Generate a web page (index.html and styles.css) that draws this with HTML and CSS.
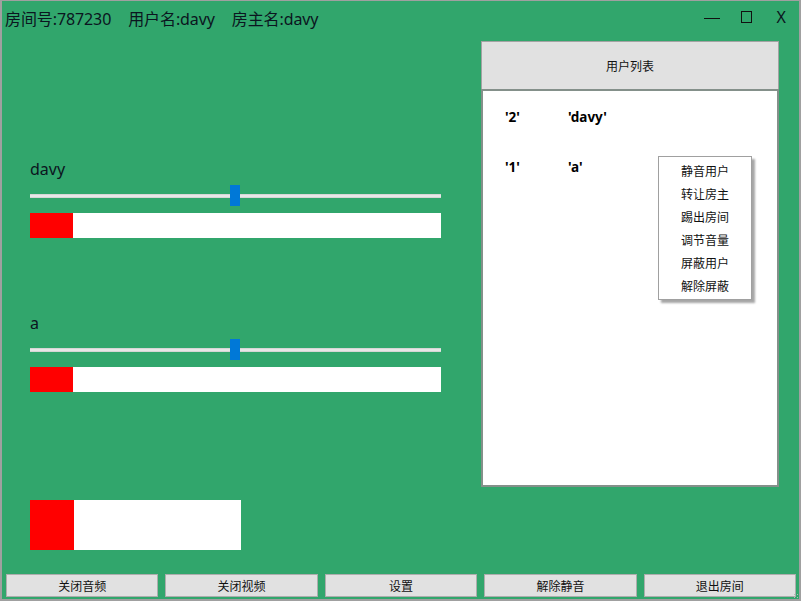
FILE: index.html
```html
<!DOCTYPE html>
<html lang="zh">
<head>
<meta charset="utf-8">
<title>房间</title>
<link rel="stylesheet" href="styles.css">
</head>
<body>
<div class="window">
  <div class="titlebar">
    <div class="title">
      <span>房间号:787230</span>
      <span>用户名:davy</span>
      <span>房主名:davy</span>
    </div>
    <div class="controls">
      <div class="ctl-min"></div>
      <div class="ctl-max"></div>
      <div class="ctl-close">X</div>
    </div>
  </div>
  <div class="main">
    <div class="left">
      <div class="channel">
        <div class="label">davy</div>
        <div class="slider"><div class="track"></div><div class="thumb"></div></div>
        <div class="meter"><div class="level" style="width:43px"></div></div>
      </div>
      <div class="channel second">
        <div class="label">a</div>
        <div class="slider"><div class="track"></div><div class="thumb"></div></div>
        <div class="meter"><div class="level" style="width:43px"></div></div>
      </div>
      <div class="meter big"><div class="level" style="width:44px"></div></div>
    </div>
    <div class="panel">
      <div class="panel-header">用户列表</div>
      <div class="panel-body">
        <div class="row"><span class="cell-id">'2'</span><span class="cell-name">'davy'</span></div>
        <div class="row"><span class="cell-id">'1'</span><span class="cell-name">'a'</span></div>
      </div>
      <div class="menu">
        <div class="menu-item">静音用户</div>
        <div class="menu-item">转让房主</div>
        <div class="menu-item">踢出房间</div>
        <div class="menu-item">调节音量</div>
        <div class="menu-item">屏蔽用户</div>
        <div class="menu-item">解除屏蔽</div>
      </div>
    </div>
  </div>
  <div class="buttons">
    <div class="btn">关闭音频</div>
    <div class="btn">关闭视频</div>
    <div class="btn">设置</div>
    <div class="btn">解除静音</div>
    <div class="btn">退出房间</div>
  </div>
  <div class="grip"></div>
</div>
</body>
</html>
```
FILE: styles.css
```css
html, body {
  margin: 0;
  padding: 0;
  background: #ffffff;
}
body {
  font-family: "Noto Sans", "Noto Sans CJK SC", sans-serif;
  color: #000;
}
.window {
  position: relative;
  width: 801px;
  height: 601px;
  box-sizing: border-box;
  background: #31a66c;
  border-top: 1px solid #a0a0a0;
  border-left: 2px solid #a0a0a0;
  border-right: 2px solid #a0a0a0;
  border-bottom: 2px solid #a0a0a0;
  display: flex;
  flex-direction: column;
}
.titlebar {
  height: 34px;
  display: flex;
  align-items: center;
  padding-left: 3px;
  flex: none;
}
.title {
  font-size: 16px;
  display: flex;
  gap: 17px;
  color: #0b1520;
  white-space: nowrap;
  letter-spacing: -0.1px;
}
.controls {
  margin-left: auto;
  display: flex;
  align-items: center;
  margin-right: 13px;
  margin-top: -2px;
}
.ctl-min {
  width: 16px;
  height: 1px;
  background: #111;
  margin-top: 3px;
}
.ctl-max {
  width: 9px;
  height: 10px;
  border: 1px solid #111;
  margin-left: 21px;
}
.ctl-close {
  margin-left: 25px;
  font-size: 16px;
  line-height: 16px;
  color: #0b1520;
}
.main {
  flex: 1;
  display: flex;
  align-items: flex-start;
}
.left {
  width: 411px;
  margin-left: 28px;
  padding-top: 124px;
}
.label {
  font-size: 16px;
  line-height: 20px;
  height: 20px;
  color: #0b1520;
}
.slider {
  position: relative;
  height: 21px;
  margin-top: 6px;
  display: flex;
  align-items: center;
}
.track {
  width: 100%;
  height: 2px;
  background: #e7e7e7;
  border-top: 1px solid #d6d6d6;
  border-bottom: 1px solid #d6d6d6;
}
.thumb {
  position: absolute;
  left: 200px;
  top: 0;
  width: 10px;
  height: 21px;
  background: #0078d7;
}
.meter {
  height: 25px;
  margin-top: 7px;
  background: #ffffff;
  display: flex;
}
.level {
  height: 100%;
  background: #ff0000;
}
.channel.second {
  margin-top: 75px;
}
.meter.big {
  width: 211px;
  height: 50px;
  margin-top: 108px;
}
.panel {
  position: relative;
  width: 298px;
  margin-left: 40px;
  margin-top: 6px;
}
.panel-header {
  height: 48px;
  box-sizing: border-box;
  background: #e1e1e1;
  border: 1px solid #a3a3a3;
  border-bottom: none;
  display: flex;
  align-items: center;
  justify-content: center;
  font-family: "Noto Sans CJK SC", sans-serif;
  font-size: 12px;
  color: #111;
}
.panel-body {
  height: 398px;
  box-sizing: border-box;
  background: #ffffff;
  border: 2px solid #84908a;
  padding-top: 1px;
}
.row {
  height: 50px;
  display: flex;
  align-items: center;
  padding-left: 22px;
  font-size: 13.5px;
  font-weight: 700;
  font-family: "Noto Sans", sans-serif;
}
.cell-id {
  width: 63px;
}
.menu {
  position: absolute;
  left: 177px;
  top: 115px;
  width: 94px;
  box-sizing: border-box;
  background: #ffffff;
  border: 1px solid #a0a0a0;
  padding: 2px 0 2px 22px;
  box-shadow: 3px 3px 2px rgba(0, 0, 0, 0.35);
}
.menu-item {
  height: 23px;
  line-height: 23px;
  font-family: "Noto Sans CJK SC", sans-serif;
  font-size: 12px;
  color: #111;
}
.buttons {
  flex: none;
  display: flex;
  gap: 7px;
  padding: 0 3px 2px 4px;
}
.btn {
  flex: 1;
  height: 23px;
  box-sizing: border-box;
  background: #e1e1e1;
  border: 1px solid #adadad;
  display: flex;
  align-items: center;
  justify-content: center;
  font-family: "Noto Sans CJK SC", sans-serif;
  font-size: 12px;
  color: #111;
}
.grip {
  position: absolute;
  right: 0;
  bottom: 0;
  width: 6px;
  height: 6px;
  background-image: radial-gradient(circle, #b8b8b8 0.8px, transparent 1px);
  background-size: 3px 3px;
}
```
